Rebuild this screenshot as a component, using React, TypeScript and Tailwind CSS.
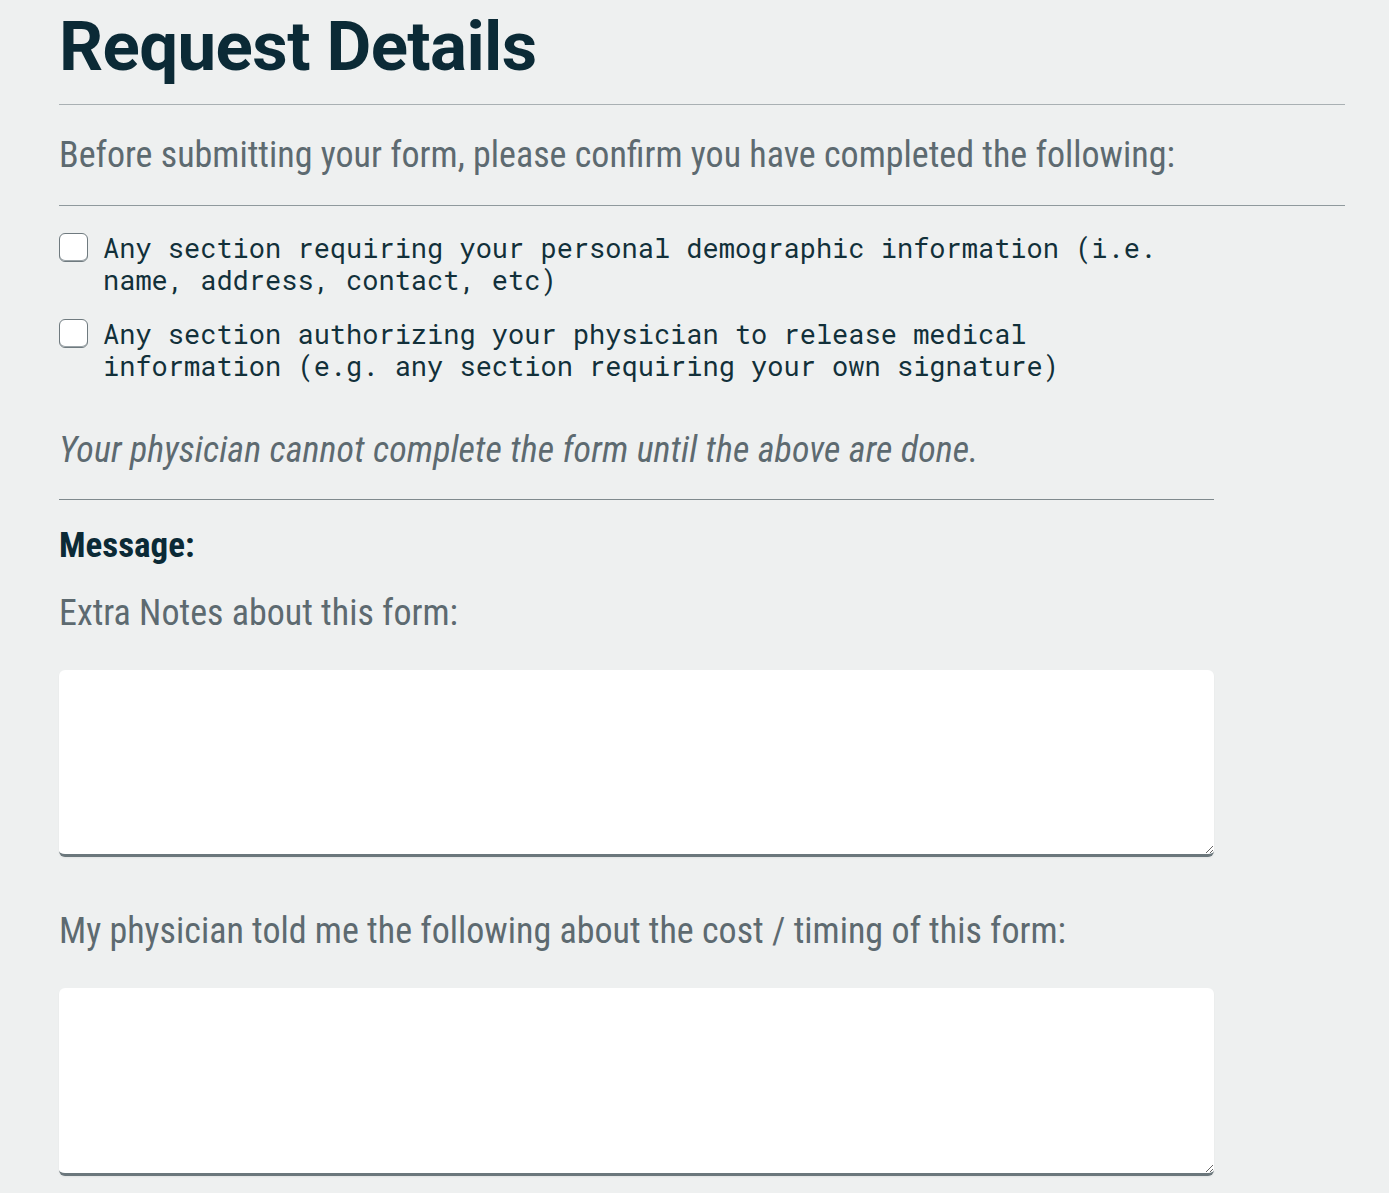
import React from "react";

const cond = { fontFamily: '"Roboto Condensed", "Roboto", "Liberation Sans Narrow", sans-serif', fontStretch: "75%" } as React.CSSProperties;

export default function App() {
  return (
    <div className="min-h-[1193px] w-full bg-[#eef0f0] pl-[59px] pr-[44px]">
      <h1 className="pt-[7px] text-[69px] font-bold leading-[80px] tracking-[-0.6px] text-[#0b2a36]" style={{ fontFamily: "Roboto, sans-serif" }}>
        Request Details
      </h1>
      <div className="mt-[17px] h-px bg-[#a9b0b3]" />
      <p className="mt-[28px] text-[36px] leading-[44px] text-[#5d6a70]" style={cond}>
        Before submitting your form, please confirm you have completed the following:
      </p>
      <div className="mt-[28px] h-px bg-[#8f999d]" />
      <div className="mt-[26px] flex flex-col gap-[22px] font-['Roboto_Mono','DejaVu_Sans_Mono',monospace] text-[27px] leading-[32px] text-[#12303a]">
        <label className="flex items-start gap-[15px]">
          <span className="mt-[1px] h-[29px] w-[29px] shrink-0 rounded-[6px] border-[1.5px] border-[#6f7a7f] bg-white shadow-[inset_0_-1px_0_#9aa3a7]" />
          <span>
            Any section requiring your personal demographic information (i.e.
            <br />
            name, address, contact, etc)
          </span>
        </label>
        <label className="flex items-start gap-[15px]">
          <span className="mt-[1px] h-[29px] w-[29px] shrink-0 rounded-[6px] border-[1.5px] border-[#6f7a7f] bg-white shadow-[inset_0_-1px_0_#9aa3a7]" />
          <span>
            Any section authorizing your physician to release medical
            <br />
            information (e.g. any section requiring your own signature)
          </span>
        </label>
      </div>
      <div className="w-[1155px]">
        <p className="mt-[46px] text-[36px] italic leading-[44px] tracking-[0.1px] text-[#5d6a70]" style={cond}>
          Your physician cannot complete the form until the above are done.
        </p>
        <div className="mt-[27px] h-px bg-[#7f898d]" />
        <p className="mt-[24px] text-[35px] font-bold leading-[44px] text-[#0b2a36]" style={cond}>
          Message:
        </p>
        <p className="mt-[23px] text-[36px] leading-[44px] text-[#5d6a70]" style={cond}>
          Extra Notes about this form:
        </p>
        <textarea className="mt-[35px] block h-[187px] w-full resize-y rounded-[6px] border-b-[3px] border-[#6b777c] bg-white shadow-[0_1px_2px_rgba(0,0,0,0.05)] outline-none" />
        <p className="mt-[52px] text-[36px] leading-[44px] text-[#5d6a70]" style={cond}>
          My physician told me the following about the cost / timing of this form:
        </p>
        <textarea className="mt-[35px] block h-[188px] w-full resize-y rounded-[6px] border-b-[3px] border-[#6b777c] bg-white shadow-[0_1px_2px_rgba(0,0,0,0.05)] outline-none" />
      </div>
    </div>
  );
}
